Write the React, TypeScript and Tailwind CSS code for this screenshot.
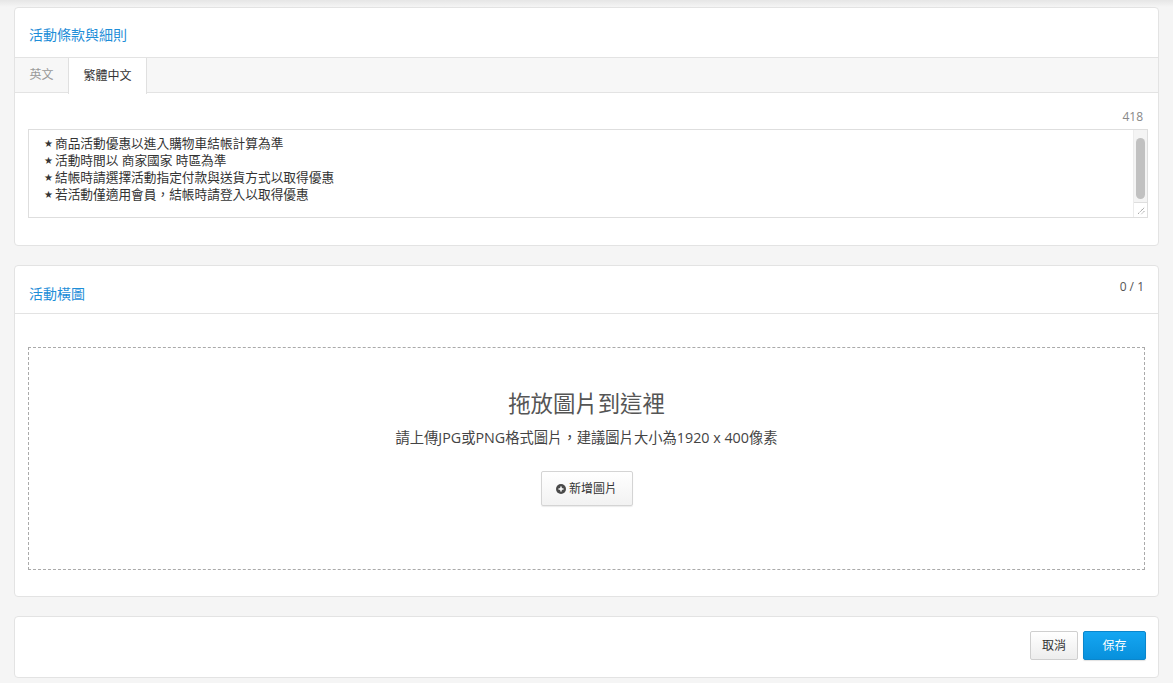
const PlusCircleIcon = ({ className }: { className: string }) => (
  <svg viewBox="0 0 16 16" className={className}>
    <circle cx="8" cy="8" r="8" fill="#4a4a4a" />
    <path d="M8 4v8M4 8h8" stroke="#fff" strokeWidth={2.4} />
  </svg>
);

const terms = [
  '商品活動優惠以進入購物車結帳計算為準',
  '活動時間以 商家國家 時區為準',
  '結帳時請選擇活動指定付款與送貨方式以取得優惠',
  '若活動僅適用會員，結帳時請登入以取得優惠',
];

function TermsCard() {
  return (
    <div className="bg-white border border-[#e3e3e3] rounded-[4px]">
      <div className="h-[50px] px-[14px] pt-[19px] border-b border-[#e3e3e3]">
        <h2 className="text-[14px] leading-[16px] text-[#1f8ed8]">活動條款與細則</h2>
      </div>
      <div className="flex h-[35px] bg-[#f7f7f7] border-b border-[#e3e3e3]">
        <button className="w-[53px] text-[12px] text-[#999]">英文</button>
        <button className="w-[79px] h-[36px] -mb-px bg-white border-x border-[#e0e0e0] text-[12px] text-[#333]">
          繁體中文
        </button>
      </div>
      <div className="pl-[13px] pr-[10px] pt-[16px] pb-[27px]">
        <div className="text-right text-[12px] leading-[16px] text-[#888] pr-[5px] mb-[4px]">418</div>
        <div className="flex h-[89px] border border-[#dedede]">
          <div className="flex-1 pl-[15px] pt-[5px] text-[12.7px] leading-[17px] text-[#333]">
            {terms.map((t) => (
              <div key={t} className="flex items-center">
                <span className="font-['DejaVu_Sans'] text-[10px] mr-[2px]">★</span>
                {t}
              </div>
            ))}
          </div>
          <div className="w-[14px] flex flex-col bg-[#f4f4f4] border-l border-[#ececec]">
            <div className="flex-1 pt-[8px] px-[2px]">
              <div className="h-[61px] rounded-full bg-[#c1c1c1]" />
            </div>
            <div className="h-[15px] bg-white border-t border-[#dedede] flex items-end justify-end p-[2px]">
              <svg viewBox="0 0 10 10" className="w-[9px] h-[9px]">
                <path d="M9 2L2 9M9 6L6 9" stroke="#555" strokeWidth={1} strokeDasharray="1 1" />
              </svg>
            </div>
          </div>
        </div>
      </div>
    </div>
  );
}

function BannerCard() {
  return (
    <div className="bg-white border border-[#e3e3e3] rounded-[4px]">
      <div className="h-[48px] px-[14px] border-b border-[#e3e3e3] flex justify-between items-start">
        <h2 className="pt-[20px] text-[14px] leading-[16px] text-[#1f8ed8]">活動橫圖</h2>
        <span className="pt-[13px] text-[12px] leading-[16px] text-[#555]">0 / 1</span>
      </div>
      <div className="px-[13px] pt-[33px] pb-[26px]">
        <div className="h-[223px] border border-dashed border-[#aaa] flex flex-col items-center">
          <div className="mt-[41px] text-[22.4px] leading-[30px] text-[#555]">拖放圖片到這裡</div>
          <div className="mt-[9px] text-[14.3px] leading-[19px] text-[#444]">
            請上傳JPG或PNG格式圖片，建議圖片大小為1920 x 400像素
          </div>
          <button className="mt-[24px] w-[92px] h-[35px] flex items-center justify-center gap-[3px] border border-[#d4d4d4] rounded-[2px] bg-gradient-to-b from-white to-[#f2f2f2] shadow-[0_1px_1px_rgba(0,0,0,0.08)] text-[12px] text-[#333]">
            <PlusCircleIcon className="w-[10px] h-[10px]" />
            新增圖片
          </button>
        </div>
      </div>
    </div>
  );
}

function ActionsCard() {
  return (
    <div className="h-[62px] bg-white border border-[#e3e3e3] rounded-[4px] flex items-center justify-end gap-[5px] pr-[12px] pb-[3px]">
      <button className="w-[48px] h-[29px] border border-[#cfcfcf] rounded-[2px] bg-gradient-to-b from-white to-[#ededed] text-[12px] text-[#333]">
        取消
      </button>
      <button className="w-[63px] h-[29px] border border-[#0a86cc] rounded-[2px] bg-gradient-to-b from-[#14a6f2] to-[#0790dc] shadow-[0_1px_1px_rgba(0,0,0,0.12)] text-[12px] text-white">
        保存
      </button>
    </div>
  );
}

export default function App() {
  return (
    <div className="min-h-[683px] bg-[#f5f5f5] font-['Open_Sans','Noto_Sans_CJK_TC',sans-serif]">
      <div className="h-[7px] bg-gradient-to-b from-[#e6e6e6] to-[#f5f5f5]" />
      <div className="px-[14px] flex flex-col gap-[19px]">
        <TermsCard />
        <BannerCard />
        <ActionsCard />
      </div>
    </div>
  );
}
